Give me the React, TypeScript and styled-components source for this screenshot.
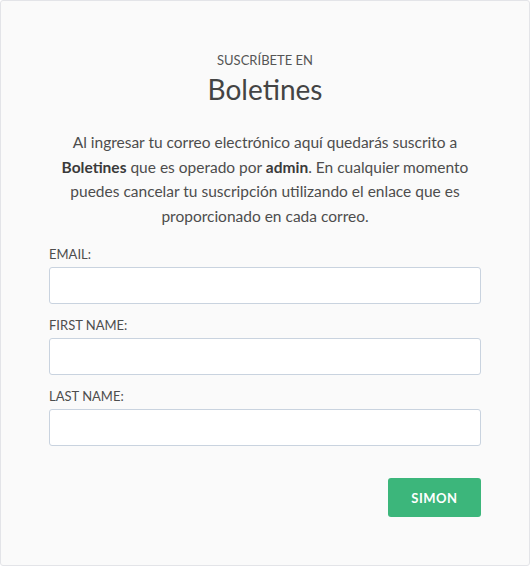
import React from "react";
import styled, { createGlobalStyle } from "styled-components";

const Global = createGlobalStyle`
  html, body { margin: 0; padding: 0; background: #ffffff; }
  body { font-family: Lato, "Open Sans", sans-serif; color: #4a4a4a; }
  * { box-sizing: border-box; }
`;

const Card = styled.div`
  width: 530px;
  height: 566px;
  background: #fafafa;
  border: 1px solid #e3e4e8;
  border-radius: 3px;
  padding: 50px 48px 0 48px;
  display: flex;
  flex-direction: column;
`;

const Kicker = styled.div`
  text-align: center;
  font-size: 13px;
  line-height: 18px;
  color: #555555;
  text-transform: uppercase;
`;

const Title = styled.h1`
  margin: 2px 0 0 0;
  text-align: center;
  font-size: 28px;
  line-height: 36px;
  font-weight: 400;
  color: #444444;
`;

const Description = styled.p`
  margin: 23px 0 0 0;
  text-align: center;
  font-size: 15.5px;
  line-height: 24.6px;
  color: #4d4d4d;
  padding: 0;
`;

const Strong = styled.strong`
  font-weight: 700;
  color: #3a3a3a;
`;

const Form = styled.form`
  margin-top: 17px;
  display: flex;
  flex-direction: column;
`;

const Field = styled.div`
  display: flex;
  flex-direction: column;
  margin-bottom: 12px;
`;

const Label = styled.label`
  font-size: 13px;
  line-height: 18px;
  color: #4d4d4d;
  text-transform: uppercase;
  margin-bottom: 4px;
`;

const Input = styled.input`
  height: 37px;
  width: 100%;
  border: 1px solid #c9d3df;
  border-radius: 3px;
  background: #ffffff;
  padding: 0 10px;
  font-family: inherit;
  font-size: 14px;
  outline: none;
`;

const Actions = styled.div`
  display: flex;
  justify-content: flex-end;
  margin-top: 20px;
`;

const Button = styled.button`
  width: 93px;
  height: 39px;
  background: #3cb67b;
  color: #ffffff;
  border: none;
  border-radius: 3px;
  font-family: inherit;
  font-weight: 700;
  font-size: 13px;
  letter-spacing: 0.5px;
  text-transform: uppercase;
`;

const fields = ["Email", "First Name", "Last Name"];

export default function App() {
  return (
    <>
      <Global />
      <Card>
        <Kicker>Suscríbete en</Kicker>
        <Title>Boletines</Title>
        <Description>
          Al ingresar tu correo electrónico aquí quedarás suscrito a <Strong>Boletines</Strong> que es operado por{" "}
          <Strong>admin</Strong>. En cualquier momento puedes cancelar tu suscripción utilizando el enlace que es
          proporcionado en cada correo.
        </Description>
        <Form onSubmit={(e) => e.preventDefault()}>
          {fields.map((f) => (
            <Field key={f}>
              <Label>{f}:</Label>
              <Input type="text" />
            </Field>
          ))}
          <Actions>
            <Button type="submit">Simon</Button>
          </Actions>
        </Form>
      </Card>
    </>
  );
}
